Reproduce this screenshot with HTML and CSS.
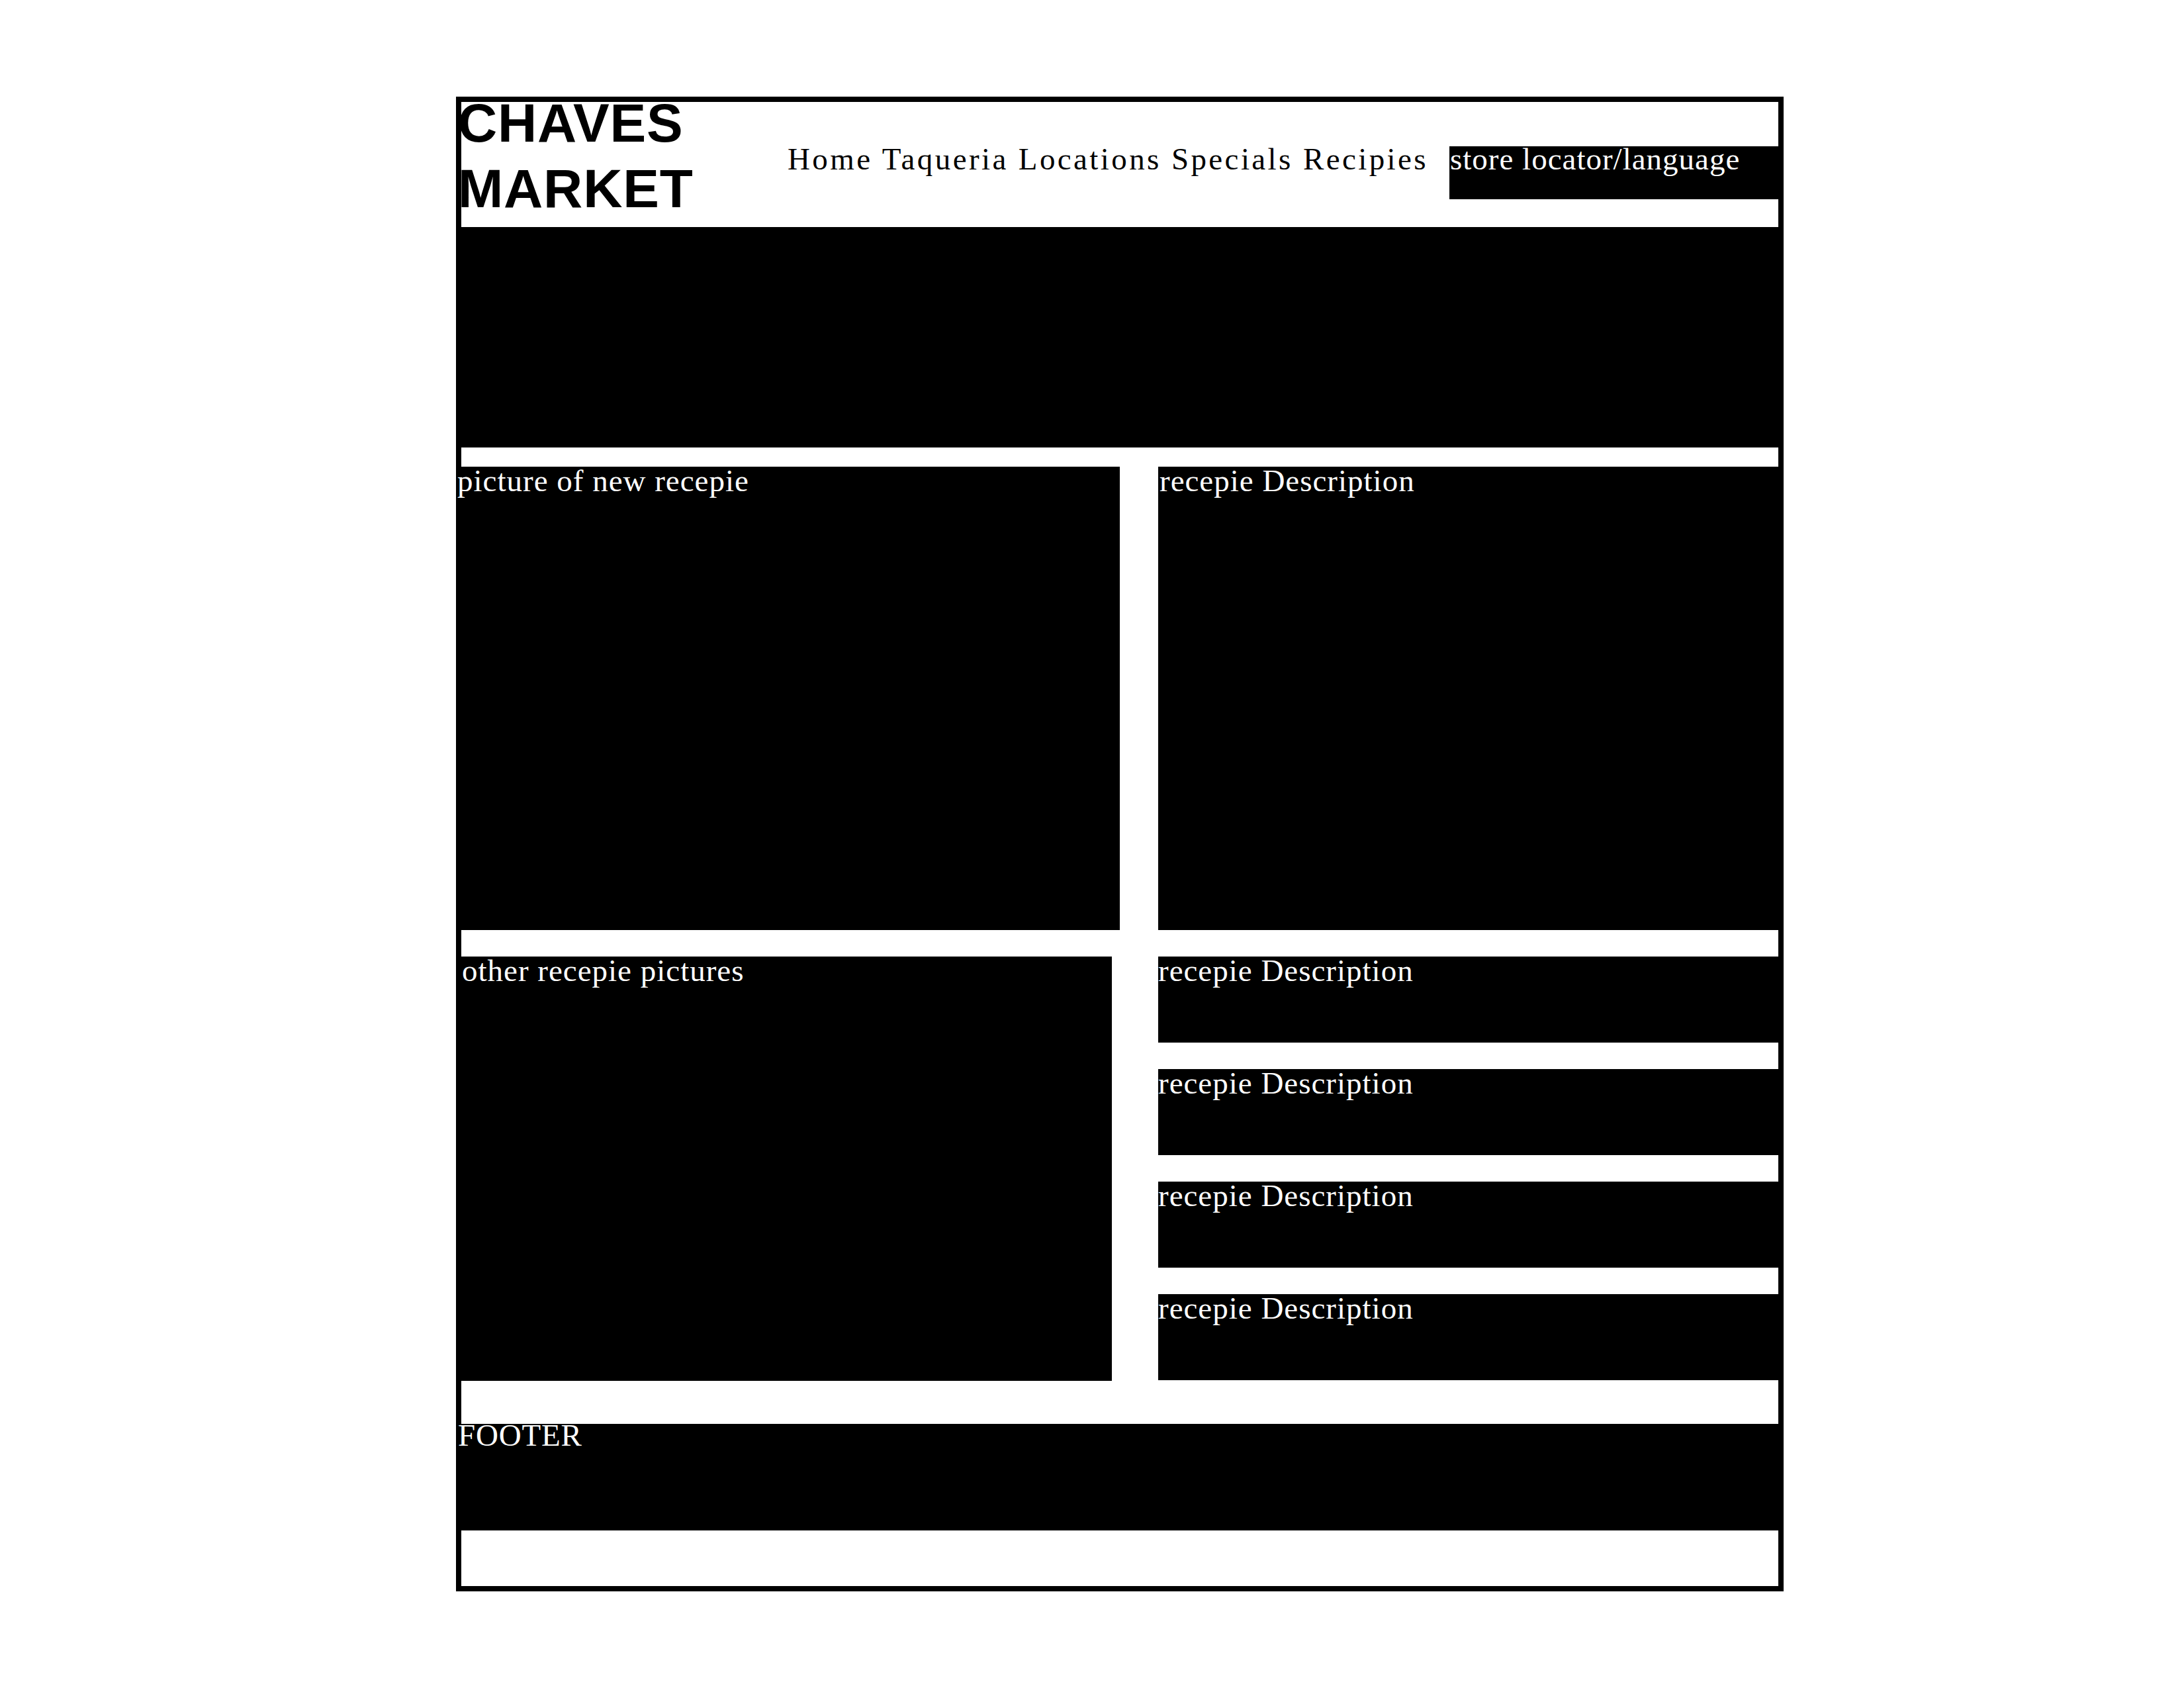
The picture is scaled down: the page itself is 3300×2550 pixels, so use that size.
FILE: index.html
```html
<!DOCTYPE html>
<html lang="en">
<head>
<meta charset="utf-8">
<title>Chaves Market – wireframe</title>
<link rel="stylesheet" href="styles.css">
</head>
<body>
<div class="frame">
  <header class="header">
    <div class="logo">CHAVES<br>MARKET</div>
    <nav class="nav">Home Taqueria Locations Specials Recipies</nav>
    <div class="store">store locator/language</div>
  </header>
  <section class="hero"></section>
  <section class="row row-feature">
    <div class="block block-bleed-left"><span class="label">picture of new recepie</span></div>
    <div class="block block-bleed-right"><span class="label">recepie Description</span></div>
  </section>
  <section class="row row-others">
    <div class="block"><span class="label">other recepie pictures</span></div>
    <div class="desc-list">
      <div class="block desc"><span class="label">recepie Description</span></div>
      <div class="block desc"><span class="label">recepie Description</span></div>
      <div class="block desc"><span class="label">recepie Description</span></div>
      <div class="block desc"><span class="label">recepie Description</span></div>
    </div>
  </section>
  <footer class="footer"><span class="label label-caps">FOOTER</span></footer>
</div>
</body>
</html>
```
FILE: styles.css
```css
* { box-sizing: border-box; }

html, body {
  margin: 0;
  padding: 0;
  background: #fff;
}

body {
  font-family: "Liberation Serif", "Times New Roman", serif;
  color: #000;
}

.frame {
  box-sizing: content-box;
  width: 1990px;
  margin: 146px 0 0 689px;
  border: 8px solid #000;
  background: #fff;
  padding-bottom: 84px;
}

/* header */
.header {
  height: 189px;
  display: flex;
  align-items: flex-start;
  background: #fff;
}

.logo {
  flex: 0 0 498px;
  margin: -18px 0 0 -5px;
  font-family: "Liberation Sans", Arial, sans-serif;
  font-weight: bold;
  font-size: 82px;
  line-height: 99px;
  letter-spacing: 0.8px;
  white-space: nowrap;
}

.nav {
  margin-top: 65px;
  font-size: 47px;
  line-height: 42px;
  letter-spacing: 3.4px;
  white-space: nowrap;
}

.store {
  margin: 67px 0 0 auto;
  width: 497px;
  height: 80px;
  background: #000;
  color: #fff;
  font-size: 47px;
  line-height: 38px;
  letter-spacing: 1px;
  padding-left: 1px;
  white-space: nowrap;
}

/* hero */
.hero {
  height: 333px;
  background: #000;
  margin-bottom: 29px;
}

/* rows */
.row {
  display: grid;
}

.row-feature {
  height: 700px;
  grid-template-columns: 1003px 1fr;
  column-gap: 58px;
  margin: 0 -8px 40px -8px;
}

.row-others {
  height: 641px;
  grid-template-columns: 983px 1fr;
  column-gap: 70px;
  margin-bottom: 65px;
}

.block {
  background: #000;
  color: #fff;
}

.desc-list {
  display: flex;
  flex-direction: column;
  gap: 40px;
}

.desc {
  height: 130px;
  flex: 0 0 130px;
}

.label {
  display: block;
  font-size: 47px;
  line-height: 42px;
  letter-spacing: 1px;
  white-space: nowrap;
  color: #fff;
}

.row-feature .label,
.footer .label {
  padding-left: 2px;
}

.row-others > .block .label {
  padding-left: 1px;
}

/* footer */
.footer {
  height: 161px;
  background: #000;
  margin: 0 -8px;
  padding-left: 1px;
}

.label-caps {
  line-height: 34px;
  letter-spacing: 0.8px;
}
```
